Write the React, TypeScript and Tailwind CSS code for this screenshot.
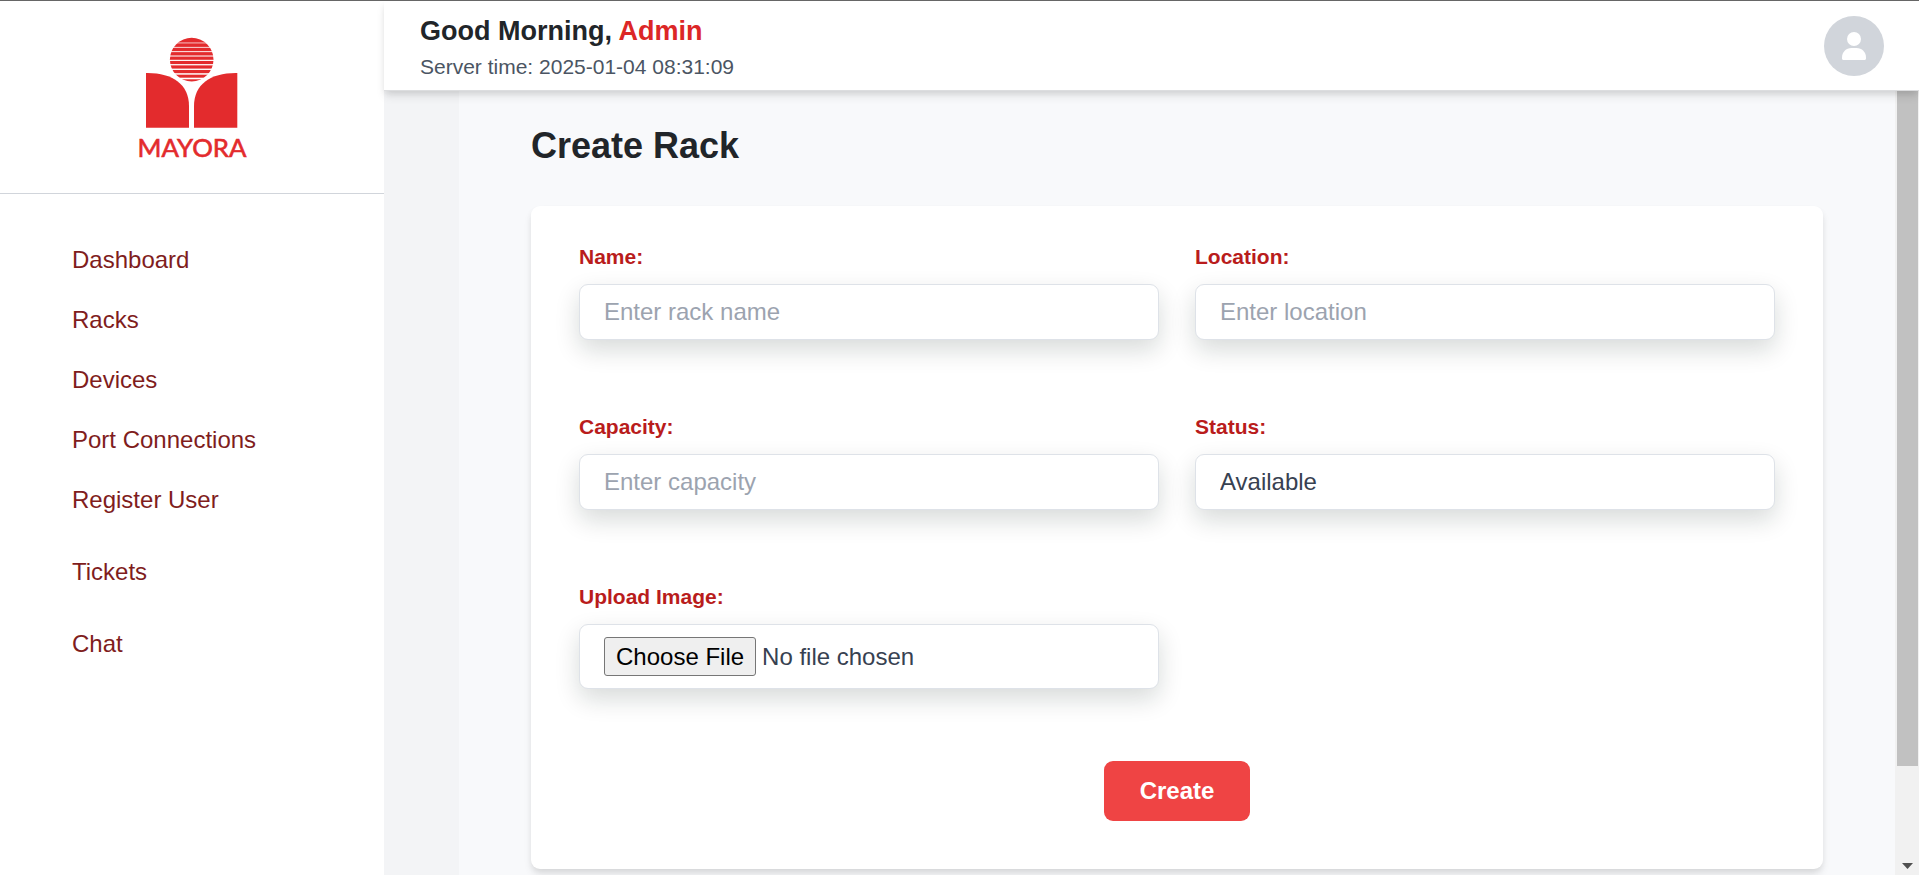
import React from "react";

const INPUT =
  "block h-14 w-full rounded-[9px] border border-[#dee2e8] bg-white px-6 text-[24px] leading-9 text-[#374151] placeholder:text-[#9ca3af] placeholder:opacity-100 shadow-[0_10px_24px_rgba(10,30,22,0.16)] outline-none appearance-none";

function Logo() {
  const stripes = [42.6, 46.9, 51.2, 55.5, 59.8, 64.1, 68.6, 73.2, 77.7];
  return (
    <svg width="120" height="130" viewBox="132 34 120 130" aria-label="Mayora">
      <circle cx="191.7" cy="59.6" r="21.8" fill="#e32b2d" />
      {stripes.map((y, i) => (
        <rect key={y} x="168" y={y} width="48" height={0.7 + i * 0.11} fill="#fff" />
      ))}
      <path d="M146 73 C172 72.5 189 84 189 106 V127.7 H146 Z" fill="#e32b2d" />
      <path d="M237.3 73 C211 72.5 194 84 194 106 V127.7 H237.3 Z" fill="#e32b2d" />
      <text
        x="137.5"
        y="156.7"
        fontSize="24.8"
        textLength="109"
        lengthAdjust="spacingAndGlyphs"
        fill="#e32b2d"
        stroke="#e32b2d"
        strokeWidth="0.6"
        className="font-['Lato',sans-serif]"
      >
        MAYORA
      </text>
    </svg>
  );
}

function NavItem({ children }: { children: React.ReactNode }) {
  return (
    <a href="#" className="block text-[24px] leading-9 text-[#7f1d1d]">
      {children}
    </a>
  );
}

function Field({ label, children }: { label: string; children: React.ReactNode }) {
  return (
    <label className="block">
      <span className="mb-3 block text-[21px] leading-[30px] font-bold text-[#b91c1c]">{label}</span>
      {children}
    </label>
  );
}

export default function App() {
  return (
    <div className="flex h-[875px] w-full flex-col overflow-hidden border-t border-[#666] bg-[#f3f4f6] font-['Liberation_Sans',Arial,sans-serif]">
      <div className="flex min-h-0 flex-1">
        <aside className="flex w-[384px] shrink-0 flex-col bg-white">
          <div className="flex h-[193px] justify-center border-b border-[#d1d5db] pt-[33px]">
            <Logo />
          </div>
          <nav className="flex flex-col px-[72px] pt-12">
            <div className="flex flex-col gap-6">
              <NavItem>Dashboard</NavItem>
              <NavItem>Racks</NavItem>
              <NavItem>Devices</NavItem>
              <NavItem>Port Connections</NavItem>
              <NavItem>Register User</NavItem>
            </div>
            <div className="mt-9 flex flex-col gap-9">
              <NavItem>Tickets</NavItem>
              <NavItem>Chat</NavItem>
            </div>
          </nav>
        </aside>

        <div className="flex min-w-0 flex-1 flex-col">
          <header className="relative z-10 flex h-[90px] shrink-0 items-center justify-between border-b border-[#dcdddf] bg-white pr-[35px] pl-9 shadow-[0_6px_9px_-1px_rgba(0,0,0,0.1),0_3px_6px_-1px_rgba(0,0,0,0.08)]">
            <div className="mt-1 flex flex-col">
              <h2 className="text-[27px] leading-[36px] font-bold text-[#212529]">
                Good Morning, <span className="text-[#dc2626]">Admin</span>
              </h2>
              <p className="mt-[3px] text-[21px] leading-[30px] text-[#4b5563]">
                Server time: 2025-01-04 08:31:09
              </p>
            </div>
            <div className="flex h-[60px] w-[60px] items-center justify-center rounded-full bg-[#d1d5db]">
              <svg width="24" height="28" viewBox="0 0 24 28" fill="#fff">
                <circle cx="12" cy="7" r="7" />
                <path d="M9.5 16h5C20 16 24 20.2 24 25.4V26.500C24 27.400 23.400 28 22.500 28H1.500C.6 28 0 27.400 0 26.500V25.400C0 20.200 4 16 9.500 16Z" />
              </svg>
            </div>
          </header>

          <div className="flex min-h-0 flex-1 pl-[75px]">
            <main className="flex-1 overflow-hidden bg-[#f8f9fb] px-[72px] pt-[33px]">
              <h1 className="text-[36px] leading-[43px] font-bold text-[#212529]">Create Rack</h1>
              <form className="mt-[39px] h-[663px] rounded-[9px] bg-white px-12 pt-9 shadow-[0_6px_9px_-1px_rgba(0,0,0,0.1),0_3px_6px_-1px_rgba(0,0,0,0.06)]">
                <div className="grid grid-cols-2 gap-x-9 gap-y-[72px]">
                  <Field label="Name:">
                    <input className={INPUT} placeholder="Enter rack name" />
                  </Field>
                  <Field label="Location:">
                    <input className={INPUT} placeholder="Enter location" />
                  </Field>
                  <Field label="Capacity:">
                    <input className={INPUT} placeholder="Enter capacity" />
                  </Field>
                  <Field label="Status:">
                    <select className={INPUT}>
                      <option>Available</option>
                      <option>Full</option>
                    </select>
                  </Field>
                  <Field label="Upload Image:">
                    <input
                      type="file"
                      className="block h-[65px] w-full rounded-[9px] border border-[#dee2e8] bg-white px-6 py-3 text-[24px] leading-9 text-[#374151] shadow-[0_10px_24px_rgba(10,30,22,0.16)] file:me-1.5 file:h-[39px] file:rounded-[3px] file:border file:border-solid file:border-[#767676] file:bg-[#efefef] file:px-[11px] file:py-0 file:text-[24px] file:leading-[36px] file:text-black"
                    />
                  </Field>
                </div>
                <div className="mt-[72px] flex justify-center">
                  <button
                    type="button"
                    className="h-[60px] w-[146px] rounded-[9px] bg-[#ef4444] text-[24px] leading-9 font-bold text-white"
                  >
                    Create
                  </button>
                </div>
              </form>
            </main>

            <div className="flex w-6 shrink-0 flex-col items-center justify-between bg-[#f1f1f1] pb-1.5">
              <div className="ml-px h-[675px] w-[21px] bg-[#c1c1c1]" />
              <svg width="11" height="6" viewBox="0 0 11 6" fill="#505050">
                <path d="M0 0H11L5.5 6Z" />
              </svg>
            </div>
          </div>
        </div>
      </div>
    </div>
  );
}
